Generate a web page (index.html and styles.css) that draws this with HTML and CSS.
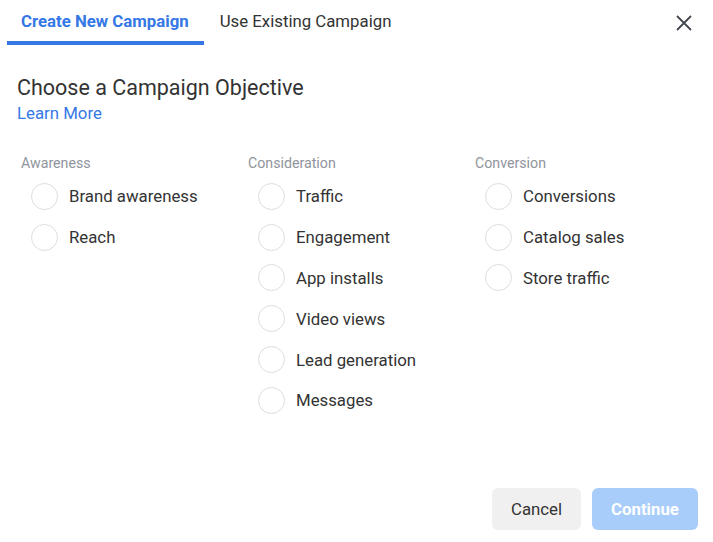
FILE: index.html
```html
<!DOCTYPE html>
<html lang="en">
<head>
<meta charset="UTF-8" />
<meta name="viewport" content="width=device-width, initial-scale=1" />
<title>Create Campaign</title>
<link rel="stylesheet" href="styles.css">
</head>
<body>

<div class="dialog">
  <div class="tabs">
    <div class="tab active">Create New Campaign</div>
    <div class="tab">Use Existing Campaign</div>
    <button class="close" aria-label="Close">
      <svg width="16" height="16" viewBox="0 0 16 16">
        <path d="M1 1 L15 15 M15 1 L1 15" stroke="#444950" stroke-width="1.8" fill="none" />
      </svg>
    </button>
  </div>

  <div class="body">
    <h2 class="title">Choose a Campaign Objective</h2>
    <a class="learn" href="#">Learn More</a>

    <div class="columns">
      <div class="column">
        <div class="heading">Awareness</div>
        <label class="option"><span class="radio"></span>Brand awareness</label>
        <label class="option"><span class="radio"></span>Reach</label>
      </div>
      <div class="column">
        <div class="heading">Consideration</div>
        <label class="option"><span class="radio"></span>Traffic</label>
        <label class="option"><span class="radio"></span>Engagement</label>
        <label class="option"><span class="radio"></span>App installs</label>
        <label class="option"><span class="radio"></span>Video views</label>
        <label class="option"><span class="radio"></span>Lead generation</label>
        <label class="option"><span class="radio"></span>Messages</label>
      </div>
      <div class="column">
        <div class="heading">Conversion</div>
        <label class="option"><span class="radio"></span>Conversions</label>
        <label class="option"><span class="radio"></span>Catalog sales</label>
        <label class="option"><span class="radio"></span>Store traffic</label>
      </div>
    </div>
  </div>

  <div class="footer">
    <button class="btn cancel">Cancel</button>
    <button class="btn continue" disabled>Continue</button>
  </div>
</div>

</body>
</html>
```

FILE: styles.css
```css
/* page */
body {
  margin: 0;
  background: #fff;
  font-family: Roboto, 'Liberation Sans', Arial, sans-serif;
  color: #333;
}
.dialog {
  width: 713px;
  height: 542px;
  display: flex;
  flex-direction: column;
}

/* tabs */
.tabs {
  display: flex;
  align-items: flex-start;
  padding: 0 0 0 7px;
}
.tab {
  font-size: 16.8px;
  line-height: 20px;
  padding: 11px 15px 10px 14px;
  border-bottom: 4px solid transparent;
  color: #333;
}
.tab + .tab {
  padding-left: 16px;
}
.tab.active {
  color: #3578e5;
  font-weight: bold;
  border-bottom-color: #3578e5;
}
.close {
  margin-left: auto;
  margin-right: 21px;
  margin-top: 15px;
  background: none;
  border: none;
  padding: 0;
  width: 16px;
  height: 16px;
  cursor: pointer;
}
.close svg {
  display: block;
}

/* objective list */
.body {
  padding: 30px 0 0 17px;
  flex: 1;
}
.title {
  margin: 0;
  font-size: 21.5px;
  font-weight: normal;
  line-height: 26px;
  color: #333;
}
.learn {
  display: block;
  font-size: 16.8px;
  line-height: 22px;
  margin-top: 1px;
  color: #3578e5;
  text-decoration: none;
  width: max-content;
}
.columns {
  display: flex;
  margin-top: 29px;
  padding-left: 4px;
}
.column {
  width: 227px;
}
.heading {
  font-size: 14.2px;
  line-height: 20px;
  color: #90949c;
  margin-bottom: 3px;
}
.option {
  display: flex;
  align-items: center;
  gap: 11px;
  height: 40.8px;
  padding-left: 10px;
  font-size: 16.8px;
  color: #333;
}
.radio {
  width: 27px;
  height: 27px;
  border: 1px solid #dadde1;
  border-radius: 50%;
  box-sizing: border-box;
  flex: none;
}

/* footer */
.footer {
  display: flex;
  justify-content: flex-end;
  gap: 11px;
  padding: 0 15px 12px 0;
}
.btn {
  height: 42px;
  border: none;
  border-radius: 6px;
  font-family: inherit;
  font-size: 16.8px;
  padding: 0;
}
.cancel {
  background: #f0f0f0;
  color: #333;
  width: 89px;
}
.continue {
  background: #a8cdfa;
  color: #fff;
  font-weight: bold;
  width: 106px;
}
```
